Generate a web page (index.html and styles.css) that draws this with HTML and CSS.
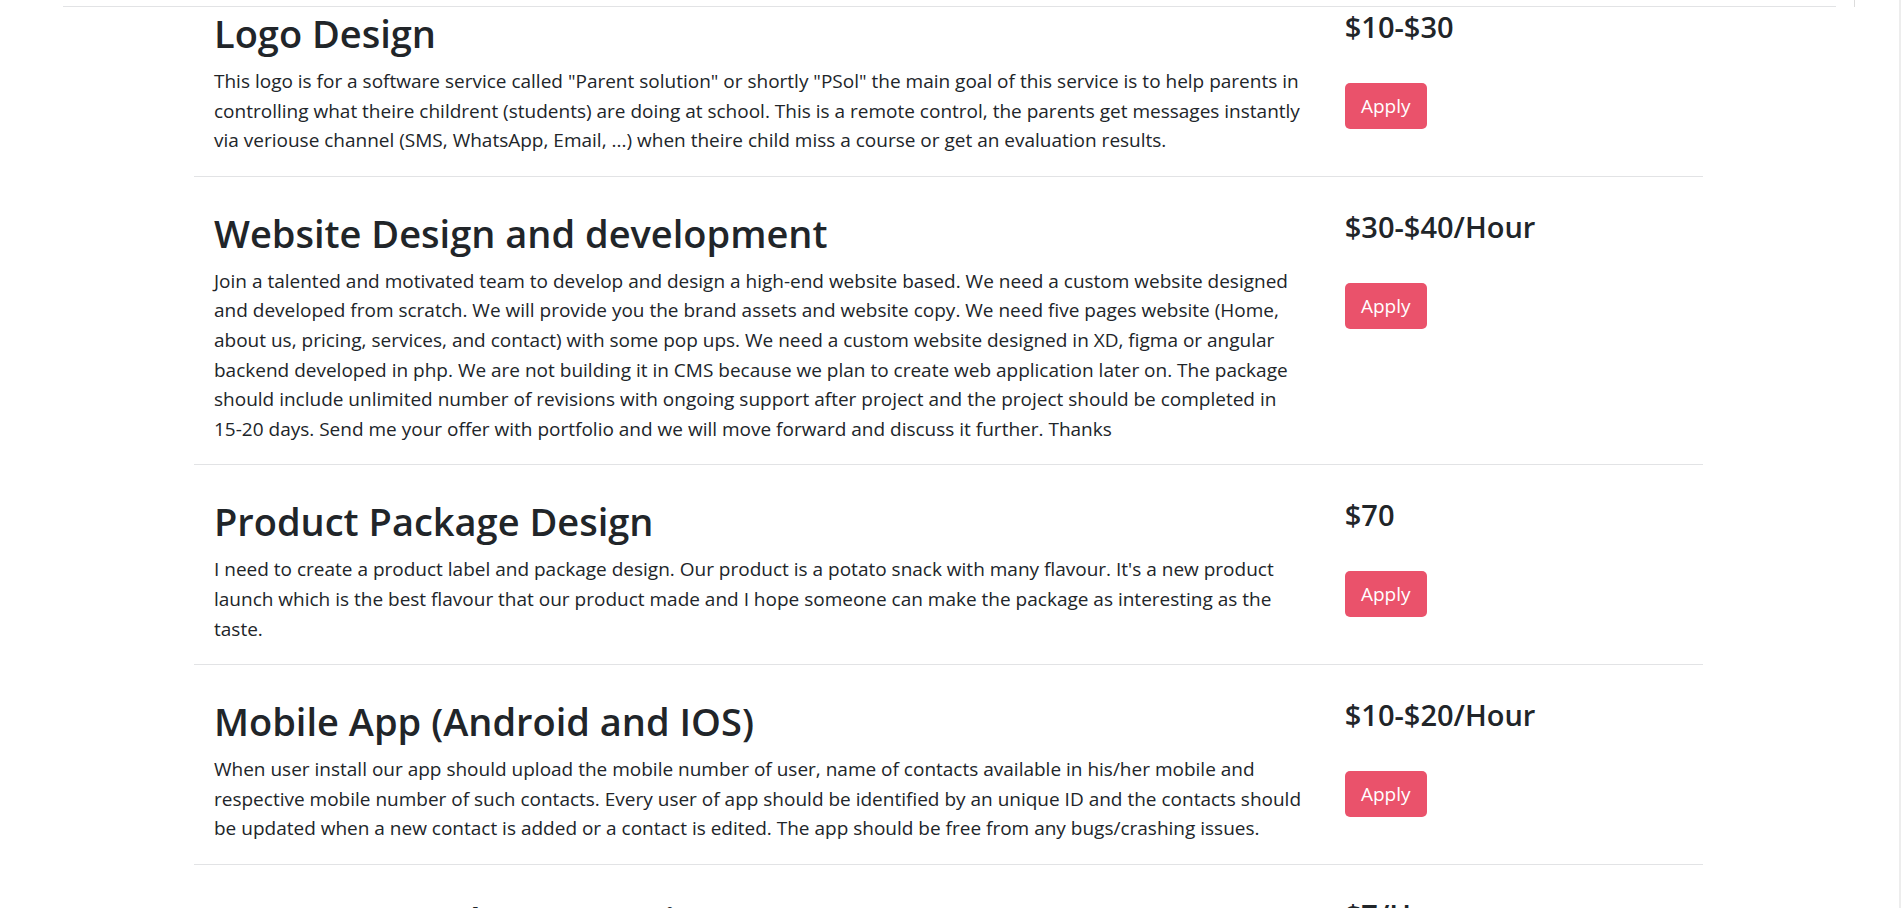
FILE: index.html
```html
<!DOCTYPE html>
<html lang="en">
<head>
<meta charset="utf-8">
<title>Jobs</title>
<link rel="stylesheet" href="styles.css">
</head>
<body>
<div class="page">
  <div class="topbar">
    <div class="topbar-line"></div>
    <div class="topbar-tick"></div>
  </div>
  <main class="jobs">
    <section class="job">
      <div class="job-main">
        <h2 class="job-title">Logo Design</h2>
        <p class="job-desc">This logo is for a software service called "Parent solution" or shortly "PSol" the main goal of this service is to help parents in controlling what theire childrent (students) are doing at school. This is a remote control, the parents get messages instantly via veriouse channel (SMS, WhatsApp, Email, ...) when theire child miss a course or get an evaluation results.</p>
      </div>
      <div class="job-side">
        <h4 class="job-price">$10-$30</h4>
        <button class="btn-apply">Apply</button>
      </div>
    </section>
    <section class="job">
      <div class="job-main">
        <h2 class="job-title">Website Design and development</h2>
        <p class="job-desc">Join a talented and motivated team to develop and design a high-end website based. We need a custom website designed and developed from scratch. We will provide you the brand assets and website copy. We need five pages website (Home, about us, pricing, services, and contact) with some pop ups. We need a custom website designed in XD, figma or angular backend developed in php. We are not building it in CMS because we plan to create web application later on. The package should include unlimited number of revisions with ongoing support after project and the project should be completed in 15-20 days. Send me your offer with portfolio and we will move forward and discuss it further. Thanks</p>
      </div>
      <div class="job-side">
        <h4 class="job-price">$30-$40/Hour</h4>
        <button class="btn-apply">Apply</button>
      </div>
    </section>
    <section class="job">
      <div class="job-main">
        <h2 class="job-title">Product Package Design</h2>
        <p class="job-desc">I need to create a product label and package design. Our product is a potato snack with many flavour. It's a new product launch which is the best flavour that our product made and I hope someone can make the package as interesting as the taste.</p>
      </div>
      <div class="job-side">
        <h4 class="job-price">$70</h4>
        <button class="btn-apply">Apply</button>
      </div>
    </section>
    <section class="job">
      <div class="job-main">
        <h2 class="job-title">Mobile App (Android and IOS)</h2>
        <p class="job-desc">When user install our app should upload the mobile number of user, name of contacts available in his/her mobile and respective mobile number of such contacts. Every user of app should be identified by an unique ID and the contacts should be updated when a new contact is added or a contact is edited. The app should be free from any bugs/crashing issues.</p>
      </div>
      <div class="job-side">
        <h4 class="job-price">$10-$20/Hour</h4>
        <button class="btn-apply">Apply</button>
      </div>
    </section>
    <section class="job">
      <div class="job-main">
        <h2 class="job-title">Instagram and Story Design</h2>
        <p class="job-desc">We need creative posts and stories for our Instagram account.</p>
      </div>
      <div class="job-side">
        <h4 class="job-price">$7/Hour</h4>
        <button class="btn-apply">Apply</button>
      </div>
    </section>
  </main>
</div>
</body>
</html>
```

FILE: styles.css
```css
html, body {
  margin: 0;
  padding: 0;
}

body {
  font-family: "Open Sans", "Noto Sans", sans-serif;
  color: #212529;
  background: #fff;
  overflow: hidden;
}

.page {
  min-height: 100vh;
  border-right: 2px solid #ededed;
  box-sizing: border-box;
}

.topbar {
  display: flex;
  height: 7px;
}

.topbar-line {
  margin-left: 63px;
  width: 1773px;
  height: 6px;
  border-bottom: 1px solid #e2e3e5;
}

.topbar-tick {
  margin-left: 18px;
  width: 1px;
  height: 7px;
  background: #dcdcdc;
}

.jobs {
  margin-left: 194px;
  width: 1509px;
}

.job {
  display: flex;
  padding-top: 32px;
  border-bottom: 1px solid #e2e3e5;
}

.job:first-child {
  padding-top: 2px;
}

.job-main {
  width: 75%;
  padding: 0 19px 0 20px;
  box-sizing: border-box;
}

.job-side {
  width: 25%;
  padding: 0 19px;
  box-sizing: border-box;
  display: flex;
  flex-direction: column;
  align-items: flex-start;
}

.job-title {
  font-size: 38px;
  font-weight: 600;
  line-height: 48px;
  margin: 0 0 10px;
}

.job-desc {
  font-size: 19px;
  line-height: 29.6px;
  margin: 0 0 20px;
}

.job-price {
  font-size: 29px;
  font-weight: 600;
  line-height: 36px;
  margin: 0 0 38px;
}

.btn-apply {
  font-family: inherit;
  font-size: 19px;
  color: #fff;
  background: #ea526b;
  border: none;
  border-radius: 5px;
  width: 82px;
  height: 46px;
  padding: 0;
  cursor: pointer;
}
```
